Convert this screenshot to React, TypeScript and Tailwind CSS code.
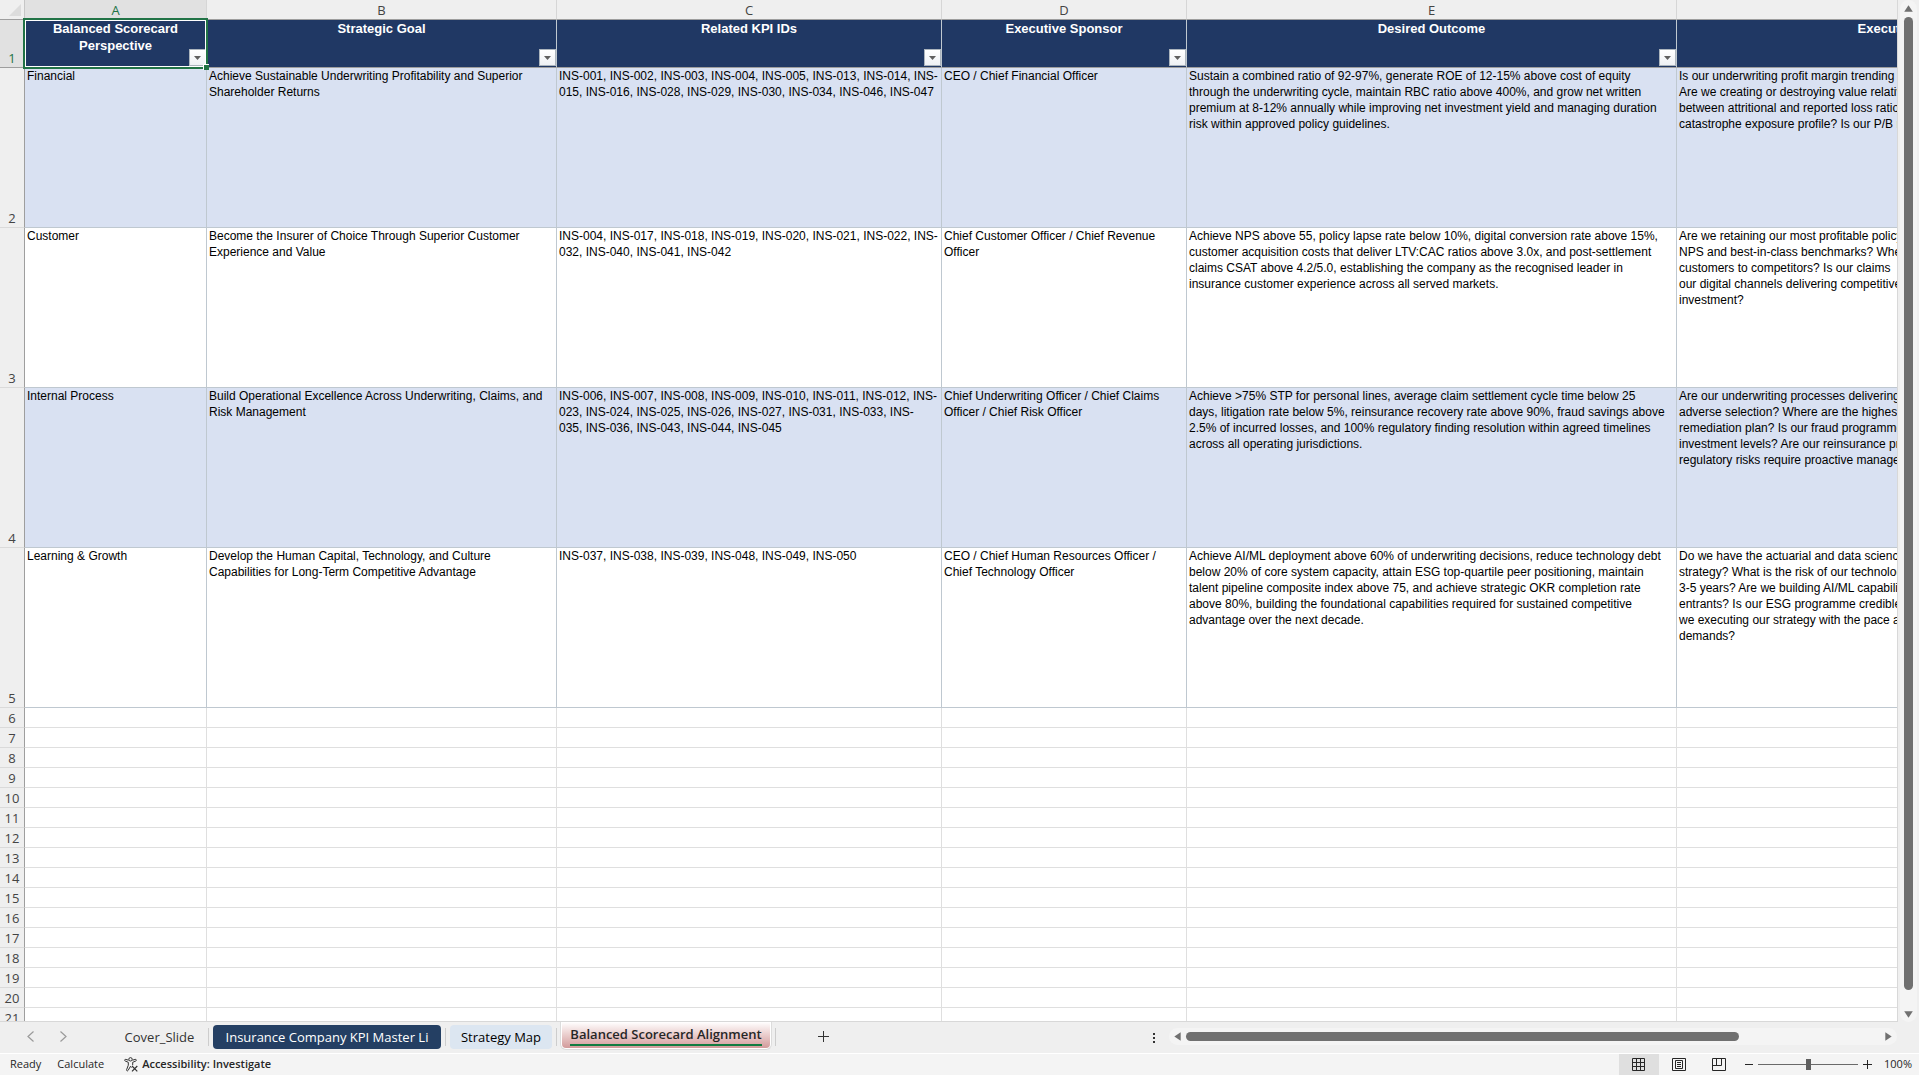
import { useState } from 'react';
import clsx from 'clsx';

type Row = {
  perspective: string;
  goal: string[];
  kpis: string[];
  sponsor: string[];
  outcome: string[];
  questions: string[];
};

const COLUMNS = [
  { letter: 'A', title: ['Balanced Scorecard', 'Perspective'] },
  { letter: 'B', title: ['Strategic Goal'] },
  { letter: 'C', title: ['Related KPI IDs'] },
  { letter: 'D', title: ['Executive Sponsor'] },
  { letter: 'E', title: ['Desired Outcome'] },
  { letter: 'F', title: ['Executive Questions'] },
];

const ROWS: Row[] = [
  {
    perspective: 'Financial',
    goal: ['Achieve Sustainable Underwriting Profitability and Superior', 'Shareholder Returns'],
    kpis: [
      'INS-001, INS-002, INS-003, INS-004, INS-005, INS-013, INS-014, INS-',
      '015, INS-016, INS-028, INS-029, INS-030, INS-034, INS-046, INS-047',
    ],
    sponsor: ['CEO / Chief Financial Officer'],
    outcome: [
      'Sustain a combined ratio of 92-97%, generate ROE of 12-15% above cost of equity',
      'through the underwriting cycle, maintain RBC ratio above 400%, and grow net written',
      'premium at 8-12% annually while improving net investment yield and managing duration',
      'risk within approved policy guidelines.',
    ],
    questions: [
      'Is our underwriting profit margin trending',
      'Are we creating or destroying value relative',
      'between attritional and reported loss ratios',
      'catastrophe exposure profile? Is our P/B ratio',
    ],
  },
  {
    perspective: 'Customer',
    goal: ['Become the Insurer of Choice Through Superior Customer', 'Experience and Value'],
    kpis: [
      'INS-004, INS-017, INS-018, INS-019, INS-020, INS-021, INS-022, INS-',
      '032, INS-040, INS-041, INS-042',
    ],
    sponsor: ['Chief Customer Officer / Chief Revenue', 'Officer'],
    outcome: [
      'Achieve NPS above 55, policy lapse rate below 10%, digital conversion rate above 15%,',
      'customer acquisition costs that deliver LTV:CAC ratios above 3.0x, and post-settlement',
      'claims CSAT above 4.2/5.0, establishing the company as the recognised leader in',
      'insurance customer experience across all served markets.',
    ],
    questions: [
      'Are we retaining our most profitable policyholders',
      'NPS and best-in-class benchmarks? Where',
      'customers to competitors? Is our claims',
      'our digital channels delivering competitive',
      'investment?',
    ],
  },
  {
    perspective: 'Internal Process',
    goal: ['Build Operational Excellence Across Underwriting, Claims, and', 'Risk Management'],
    kpis: [
      'INS-006, INS-007, INS-008, INS-009, INS-010, INS-011, INS-012, INS-',
      '023, INS-024, INS-025, INS-026, INS-027, INS-031, INS-033, INS-',
      '035, INS-036, INS-043, INS-044, INS-045',
    ],
    sponsor: ['Chief Underwriting Officer / Chief Claims', 'Officer / Chief Risk Officer'],
    outcome: [
      'Achieve >75% STP for personal lines, average claim settlement cycle time below 25',
      'days, litigation rate below 5%, reinsurance recovery rate above 90%, fraud savings above',
      '2.5% of incurred losses, and 100% regulatory finding resolution within agreed timelines',
      'across all operating jurisdictions.',
    ],
    questions: [
      'Are our underwriting processes delivering',
      'adverse selection? Where are the highest',
      'remediation plan? Is our fraud programme',
      'investment levels? Are our reinsurance programmes',
      'regulatory risks require proactive management',
    ],
  },
  {
    perspective: 'Learning & Growth',
    goal: [
      'Develop the Human Capital, Technology, and Culture',
      'Capabilities for Long-Term Competitive Advantage',
    ],
    kpis: ['INS-037, INS-038, INS-039, INS-048, INS-049, INS-050'],
    sponsor: ['CEO / Chief Human Resources Officer /', 'Chief Technology Officer'],
    outcome: [
      'Achieve AI/ML deployment above 60% of underwriting decisions, reduce technology debt',
      'below 20% of core system capacity, attain ESG top-quartile peer positioning, maintain',
      'talent pipeline composite index above 75, and achieve strategic OKR completion rate',
      'above 80%, building the foundational capabilities required for sustained competitive',
      'advantage over the next decade.',
    ],
    questions: [
      'Do we have the actuarial and data science',
      'strategy? What is the risk of our technology',
      '3-5 years? Are we building AI/ML capabilities',
      'entrants? Is our ESG programme credible',
      'we executing our strategy with the pace and',
      'demands?',
    ],
  },
];

const EMPTY_ROWS = Array.from({ length: 16 }, (_, i) => i + 6);

function Lines({ lines }: { lines: string[] }) {
  return (
    <>
      {lines.map((line) => (
        <span key={line} className="block whitespace-nowrap">
          {line}
        </span>
      ))}
    </>
  );
}

function RowHeader({ n, active, frozen }: { n: number; active?: boolean; frozen?: boolean }) {
  return (
    <th
      scope="row"
      className={clsx(
        "border-r border-b border-r-[#9e9e9e] p-0 text-center align-bottom font-['Open_Sans',sans-serif] text-[13px] leading-[18px] font-normal",
        frozen ? 'border-b-[#9e9e9e]' : 'border-b-[#dadada]',
        active ? 'bg-[#e1e1e1] text-[#217346]' : 'bg-[#efefef] text-[#444444]'
      )}
    >
      {n}
    </th>
  );
}

function FilterButton({ label }: { label: string }) {
  return (
    <button
      type="button"
      aria-label={`Filter ${label}`}
      className="absolute right-0 bottom-px flex h-[17px] w-[17px] items-center justify-center border border-[#abb4bd] bg-linear-to-b from-white to-[#eef1f5]"
    >
      <svg width="7" height="4" viewBox="0 0 7 4">
        <path d="M0 0h7L3.5 4z" fill="#5f5f5f" />
      </svg>
    </button>
  );
}

function Sheet() {
  return (
    <div className="relative min-w-0 flex-1 overflow-hidden border-r border-b border-[#d8d8d8] bg-white">
      <table className="w-[2167px] table-fixed border-separate border-spacing-0 font-['Liberation_Sans',Arial,sans-serif] text-xs leading-4 text-black">
        <colgroup>
          <col className="w-[25px]" />
          <col className="w-[182px]" />
          <col className="w-[350px]" />
          <col className="w-[385px]" />
          <col className="w-[245px]" />
          <col className="w-[490px]" />
          <col className="w-[490px]" />
        </colgroup>
        <thead>
          <tr className="h-5 bg-[#efefef]">
            <th className="border-r border-b border-r-[#c6c6c6] border-b-[#9e9e9e] p-0">
              <svg width="12" height="12" viewBox="0 0 12 12" className="mt-px ml-[9px]">
                <path d="M12 0v12H0z" fill="#dcdcdc" />
              </svg>
            </th>
            {COLUMNS.map((col, i) => (
              <th
                key={col.letter}
                scope="col"
                className={clsx(
                  "border-r border-b border-r-[#d6d6d6] border-b-[#9e9e9e] p-0 font-['Open_Sans',sans-serif] text-[13px] leading-[18px] font-normal",
                  i === 0 ? 'bg-[#e1e1e1] text-[#217346]' : 'text-[#444444]'
                )}
              >
                {col.letter}
              </th>
            ))}
          </tr>
        </thead>
        <tbody>
          <tr className="h-12 bg-[#203864]">
            <RowHeader n={1} active frozen />
            {COLUMNS.map((col) => (
              <td
                key={col.letter}
                className="relative border-r border-b border-r-[#bfc8d0] border-b-[#9e9e9e] p-0 text-center align-top text-[13px] leading-[17px] font-bold text-white"
              >
                <Lines lines={col.title} />
                <FilterButton label={col.title.join(' ')} />
              </td>
            ))}
          </tr>
          {ROWS.map((row, i) => (
            <tr key={row.perspective} className={clsx('h-40', i % 2 === 0 && 'bg-[#d9e1f2]')}>
              <RowHeader n={i + 2} />
              {[[row.perspective], row.goal, row.kpis, row.sponsor, row.outcome, row.questions].map(
                (lines, c) => (
                  <td
                    key={COLUMNS[c].letter}
                    className="border-r border-b border-[#bfc8d0] py-0 pr-0 pl-0.5 align-top"
                  >
                    <Lines lines={lines} />
                  </td>
                )
              )}
            </tr>
          ))}
          {EMPTY_ROWS.map((n) => (
            <tr key={n} className="h-5">
              <RowHeader n={n} />
              {COLUMNS.map((col) => (
                <td key={col.letter} className="border-r border-b border-[#dfdfdf] p-0" />
              ))}
            </tr>
          ))}
        </tbody>
      </table>
      {/* active cell outline, sits over A1 */}
      <div className="pointer-events-none absolute top-[18px] left-[23px] h-[51px] w-[185px] border-2 border-[#217346]">
        <div className="h-full border border-white" />
        <div className="absolute -right-[3px] -bottom-[3px] size-[6px] border-t border-l border-white bg-[#217346]" />
      </div>
    </div>
  );
}

function VerticalScrollbar() {
  return (
    <div className="flex w-[21px] flex-none justify-center bg-[#efefef]">
      <div className="flex w-[17px] flex-col items-center rounded-full bg-[#f4f4f4] pt-[5px] pb-1">
        <button type="button" aria-label="Scroll up">
          <svg width="9" height="7" viewBox="0 0 9 7" className="block">
            <path d="M4.500 0.300 8.800 6.700H0.200z" fill="#707070" />
          </svg>
        </button>
        <div className="mt-[5px] mb-[21px] w-[9px] flex-1 rounded-full bg-[#707070]" />
        <button type="button" aria-label="Scroll down">
          <svg width="9" height="7" viewBox="0 0 9 7" className="block">
            <path d="M4.500 6.700 8.800 0.300H0.200z" fill="#707070" />
          </svg>
        </button>
      </div>
    </div>
  );
}

function HorizontalScrollbar() {
  return (
    <div className="flex h-[17px] flex-1 items-center rounded-full bg-[#f4f4f4] px-[5px]">
      <button type="button" aria-label="Scroll left">
        <svg width="7" height="9" viewBox="0 0 7 9" className="block">
          <path d="M0.300 4.500 6.700 0.200v8.600z" fill="#707070" />
        </svg>
      </button>
      <div className="mr-[146px] ml-[5px] h-[9px] flex-1 rounded-full bg-[#707070]" />
      <button type="button" aria-label="Scroll right">
        <svg width="7" height="9" viewBox="0 0 7 9" className="block">
          <path d="M6.700 4.500 0.300 0.200v8.600z" fill="#707070" />
        </svg>
      </button>
    </div>
  );
}

function Divider() {
  return <div className="mt-[6px] h-[18px] w-px flex-none bg-[#cdcdcd]" />;
}

function SheetTabs() {
  return (
    <div className="flex h-[31px] flex-none items-start bg-[#efefef] pr-[22px] text-[13px] text-[#333333]">
      <button type="button" aria-label="Previous sheet" className="mt-[9px] ml-[27px]">
        <svg width="8" height="11" viewBox="0 0 8 11" fill="none" stroke="#9a9a9a" strokeWidth="1.200">
          <path d="M6.500 0.500 1 5.500l5.500 5" />
        </svg>
      </button>
      <button type="button" aria-label="Next sheet" className="mt-[9px] ml-6">
        <svg width="8" height="11" viewBox="0 0 8 11" fill="none" stroke="#9a9a9a" strokeWidth="1.200">
          <path d="M1.500 0.500 7 5.500l-5.500 5" />
        </svg>
      </button>
      <nav aria-label="Sheets" className="ml-11 flex items-start">
        <button type="button" className="mt-[3px] h-6 w-[97px] leading-6">
          Cover_Slide
        </button>
        <Divider />
        <button
          type="button"
          className="mx-1 mt-[3px] h-6 w-[228px] rounded bg-[#243f63] leading-6 whitespace-nowrap text-white"
        >
          Insurance Company KPI Master Li
        </button>
        <Divider />
        <button
          type="button"
          className="mx-1 mt-[3px] h-6 w-[102px] rounded bg-[#dce6f1] leading-6 whitespace-nowrap text-black"
        >
          Strategy Map
        </button>
        <Divider />
        <button
          type="button"
          aria-current="page"
          className="mx-[3px] h-7 w-[212px] rounded-b-md border border-t-0 border-[#dcdcdc] bg-white px-px pb-px font-semibold text-[#262626]"
        >
          <span className="flex h-full flex-col items-center rounded-b bg-linear-to-b from-white to-[#d29b9b]">
            <span className="border-b-2 border-[#107c41] pt-[2px] leading-[20px] whitespace-nowrap">
              Balanced Scorecard Alignment
            </span>
          </span>
        </button>
        <Divider />
      </nav>
      <button type="button" aria-label="New sheet" className="mt-[9px] ml-[42px]">
        <svg width="11" height="11" viewBox="0 0 11 11" stroke="#333333">
          <path d="M5.500 0v11M0 5.500h11" />
        </svg>
      </button>
      <div className="ml-81 flex flex-1 items-center gap-[14px] pt-[6px]">
        <div className="flex flex-col gap-0.5 pt-0.5">
          <span className="size-0.5 bg-[#333333]" />
          <span className="size-0.5 bg-[#333333]" />
          <span className="size-0.5 bg-[#333333]" />
        </div>
        <HorizontalScrollbar />
      </div>
    </div>
  );
}

function AccessibilityIcon() {
  return (
    <svg width="14" height="15" viewBox="0 0 14 15" fill="none" stroke="#333333" strokeLinejoin="round">
      <circle cx="6.500" cy="2.300" r="1.700" />
      <path d="M4.600 3.200 1.700 2.400c-1.200-.2-1.500 1.200-.5 1.600l3.100 1.300v2.900l-1.700 4.500c-.3 1.200 1 1.600 1.500.7L6.500 9.300l.9 1.300M8.400 3.200l2.900-.8c1.200-.2 1.500 1.200.5 1.600L8.700 5.300v2.900" />
      <path d="m8 9 5.300 5.300M13.300 9 8 14.300" strokeWidth="1.200" />
    </svg>
  );
}

const VIEWS = [
  { name: 'Normal', path: 'M.5.5h12v12H.5zM4.500.5v12M8.500.5v12M.5 4.500h12M.5 8.500h12' },
  { name: 'Page Layout', path: 'M.5.5h13v12H.5zM3.500 2.500h7v8h-7zM5 4.500h4M5 6.500h4M5 8.500h4' },
  { name: 'Page Break Preview', path: 'M.5.5h13v12H.5zM4.500.5v7M9.500.5v7M.5 7.500h9' },
];

function StatusBar() {
  const [view, setView] = useState('Normal');
  const [zoom, setZoom] = useState(100);

  return (
    <footer className="flex h-[22px] flex-none items-center border-t border-white bg-[#f4f4f4] text-[11px] text-[#262626]">
      <span className="ml-[10px]">Ready</span>
      <span className="ml-4">Calculate</span>
      <button type="button" className="ml-5 flex items-center gap-1 font-semibold">
        <AccessibilityIcon />
        Accessibility: Investigate
      </button>
      <div className="ml-auto flex h-full">
        {VIEWS.map((v) => (
          <button
            key={v.name}
            type="button"
            aria-label={v.name}
            onClick={() => setView(v.name)}
            className={clsx(
              'flex w-10 items-center justify-center',
              view === v.name && 'bg-[#dfdfdf]'
            )}
          >
            <svg width="14" height="13" viewBox="0 0 14 13" fill="none" stroke="#262626">
              <path d={v.path} />
            </svg>
          </button>
        ))}
      </div>
      <button type="button" aria-label="Zoom out" className="ml-[6px]" onClick={() => setZoom((z) => z - 10)}>
        <svg width="8" height="9" viewBox="0 0 8 9" stroke="#262626">
          <path d="M0 4.500h8" />
        </svg>
      </button>
      <input
        type="range"
        aria-label="Zoom"
        min={10}
        max={190}
        value={zoom}
        onChange={(e) => setZoom(Number(e.target.value))}
        className="mx-[5px] h-[11px] w-[100px] appearance-none bg-transparent [&::-webkit-slider-runnable-track]:h-px [&::-webkit-slider-runnable-track]:bg-[#6a6a6a] [&::-webkit-slider-thumb]:-mt-[5px] [&::-webkit-slider-thumb]:h-[11px] [&::-webkit-slider-thumb]:w-[5px] [&::-webkit-slider-thumb]:appearance-none [&::-webkit-slider-thumb]:bg-[#5f5f5f]"
      />
      <button type="button" aria-label="Zoom in" onClick={() => setZoom((z) => z + 10)}>
        <svg width="9" height="9" viewBox="0 0 9 9" stroke="#262626">
          <path d="M4.500 0v9M0 4.500h9" />
        </svg>
      </button>
      <span className="mr-[7px] w-10 text-right">{zoom}%</span>
    </footer>
  );
}

export default function App() {
  return (
    <div className="flex h-screen flex-col overflow-hidden bg-[#efefef] font-['Open_Sans',sans-serif]">
      <main className="flex min-h-0 flex-1">
        <Sheet />
        <VerticalScrollbar />
      </main>
      <SheetTabs />
      <StatusBar />
    </div>
  );
}
